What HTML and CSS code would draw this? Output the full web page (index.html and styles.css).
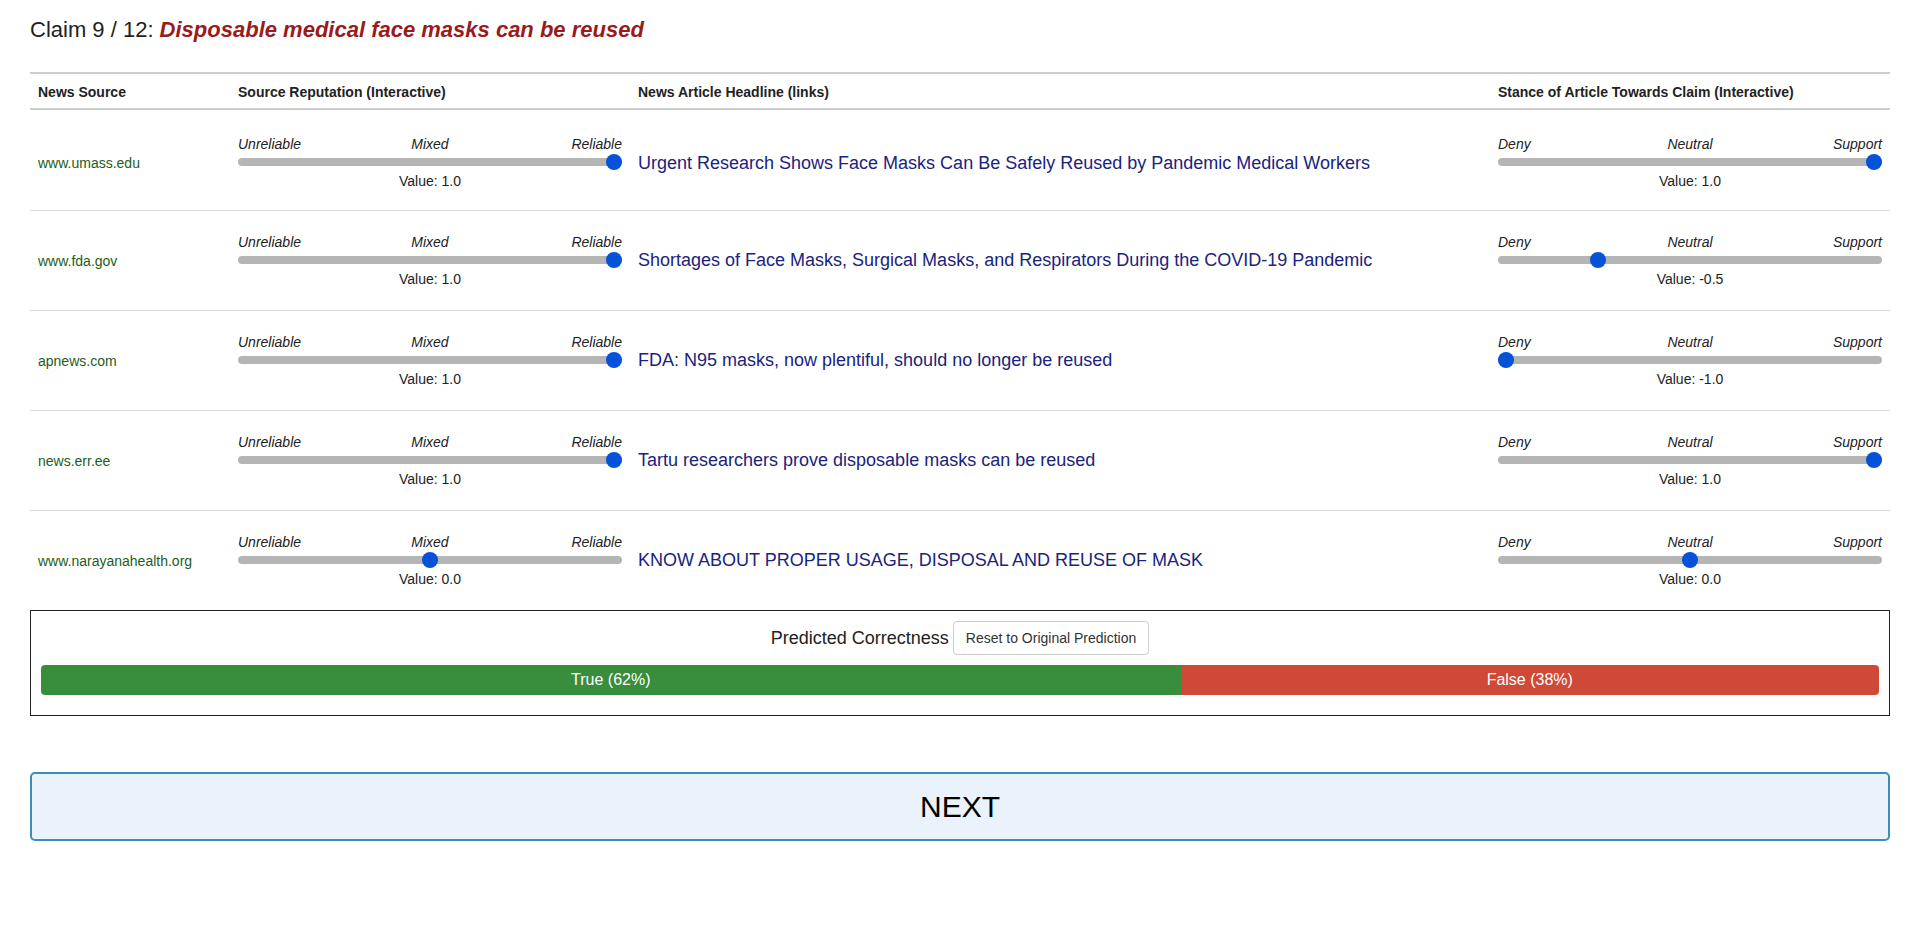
FILE: index.html
```html
<!DOCTYPE html>
<html lang="en">
<head>
<meta charset="utf-8">
<title>Claim 9 / 12</title>
<link rel="stylesheet" href="styles.css">
</head>
<body>
<div class="page">
  <h1 class="claim">Claim 9 / 12: <span class="claim-text">Disposable medical face masks can be reused</span></h1>

  <div class="sources">
    <div class="grid-row head">
      <div class="cell">News Source</div>
      <div class="cell">Source Reputation (Interactive)</div>
      <div class="cell">News Article Headline (links)</div>
      <div class="cell">Stance of Article Towards Claim (Interactive)</div>
    </div>

    <div class="grid-row item first">
      <div class="cell source">www.umass.edu</div>
      <div class="cell">
        <div class="slider-labels"><span>Unreliable</span><span>Mixed</span><span>Reliable</span></div>
        <input class="range" type="range" min="-1" max="1" step="0.1" value="1">
        <div class="value">Value: 1.0</div>
      </div>
      <div class="cell headline"><a href="#">Urgent Research Shows Face Masks Can Be Safely Reused by Pandemic Medical Workers</a></div>
      <div class="cell">
        <div class="slider-labels"><span>Deny</span><span>Neutral</span><span>Support</span></div>
        <input class="range" type="range" min="-1" max="1" step="0.1" value="1">
        <div class="value">Value: 1.0</div>
      </div>
    </div>

    <div class="grid-row item">
      <div class="cell source">www.fda.gov</div>
      <div class="cell">
        <div class="slider-labels"><span>Unreliable</span><span>Mixed</span><span>Reliable</span></div>
        <input class="range" type="range" min="-1" max="1" step="0.1" value="1">
        <div class="value">Value: 1.0</div>
      </div>
      <div class="cell headline"><a href="#">Shortages of Face Masks, Surgical Masks, and Respirators During the COVID-19 Pandemic</a></div>
      <div class="cell">
        <div class="slider-labels"><span>Deny</span><span>Neutral</span><span>Support</span></div>
        <input class="range" type="range" min="-1" max="1" step="0.1" value="-0.5">
        <div class="value">Value: -0.5</div>
      </div>
    </div>

    <div class="grid-row item">
      <div class="cell source">apnews.com</div>
      <div class="cell">
        <div class="slider-labels"><span>Unreliable</span><span>Mixed</span><span>Reliable</span></div>
        <input class="range" type="range" min="-1" max="1" step="0.1" value="1">
        <div class="value">Value: 1.0</div>
      </div>
      <div class="cell headline"><a href="#">FDA: N95 masks, now plentiful, should no longer be reused</a></div>
      <div class="cell">
        <div class="slider-labels"><span>Deny</span><span>Neutral</span><span>Support</span></div>
        <input class="range" type="range" min="-1" max="1" step="0.1" value="-1">
        <div class="value">Value: -1.0</div>
      </div>
    </div>

    <div class="grid-row item">
      <div class="cell source">news.err.ee</div>
      <div class="cell">
        <div class="slider-labels"><span>Unreliable</span><span>Mixed</span><span>Reliable</span></div>
        <input class="range" type="range" min="-1" max="1" step="0.1" value="1">
        <div class="value">Value: 1.0</div>
      </div>
      <div class="cell headline"><a href="#">Tartu researchers prove disposable masks can be reused</a></div>
      <div class="cell">
        <div class="slider-labels"><span>Deny</span><span>Neutral</span><span>Support</span></div>
        <input class="range" type="range" min="-1" max="1" step="0.1" value="1">
        <div class="value">Value: 1.0</div>
      </div>
    </div>

    <div class="grid-row item">
      <div class="cell source">www.narayanahealth.org</div>
      <div class="cell">
        <div class="slider-labels"><span>Unreliable</span><span>Mixed</span><span>Reliable</span></div>
        <input class="range" type="range" min="-1" max="1" step="0.1" value="0">
        <div class="value">Value: 0.0</div>
      </div>
      <div class="cell headline"><a href="#">KNOW ABOUT PROPER USAGE, DISPOSAL AND REUSE OF MASK</a></div>
      <div class="cell">
        <div class="slider-labels"><span>Deny</span><span>Neutral</span><span>Support</span></div>
        <input class="range" type="range" min="-1" max="1" step="0.1" value="0">
        <div class="value">Value: 0.0</div>
      </div>
    </div>
  </div>

  <div class="predict">
    <div class="predict-head">
      <span class="predict-title">Predicted Correctness</span>
      <button class="reset" type="button">Reset to Original Prediction</button>
    </div>
    <div class="bar">
      <div class="bar-true" style="width: 62%">True (62%)</div>
      <div class="bar-false">False (38%)</div>
    </div>
  </div>

  <button class="next" type="button">NEXT</button>
</div>
</body>
</html>
```

FILE: styles.css
```css
* {
  box-sizing: border-box;
}

body {
  margin: 0;
  background: #ffffff;
  font-family: "Liberation Sans", Arial, sans-serif;
  color: #222222;
}

.page {
  padding: 17px 30px 0;
}

.claim {
  margin: 0 0 30px;
  font-size: 22px;
  font-weight: normal;
  line-height: 25px;
  color: #222222;
}

.claim-text {
  color: #991b1b;
  font-weight: bold;
  font-style: italic;
}

.grid-row {
  display: grid;
  grid-template-columns: 200px 400px 1fr 400px;
  align-items: center;
}

.cell {
  padding: 0 8px;
}

.head {
  height: 38px;
  border-top: 2px solid #cdcdcd;
  border-bottom: 2px solid #cdcdcd;
  font-size: 14px;
  font-weight: bold;
  line-height: 18px;
  padding-top: 1px;
  color: #222222;
}

.item {
  height: 100px;
  border-top: 1px solid #dddddd;
}

.item.first {
  border-top: none;
  padding-top: 6px;
}

.source {
  font-size: 14px;
  color: #1b5e20;
}

.headline a {
  font-size: 18px;
  color: #1a237e;
  text-decoration: none;
}

.slider-labels {
  display: grid;
  grid-template-columns: 1fr auto 1fr;
  font-size: 14px;
  font-style: italic;
  line-height: 16px;
  color: #222222;
}

.slider-labels span:first-child {
  justify-self: start;
}

.slider-labels span:last-child {
  justify-self: end;
}

.range {
  -webkit-appearance: none;
  appearance: none;
  display: block;
  width: 100%;
  height: 16px;
  margin: 2px 0 3px;
  padding: 0;
  background: transparent;
}

.range::-webkit-slider-runnable-track {
  height: 8px;
  background: #b5b5b5;
  border-radius: 4px;
}

.range::-webkit-slider-thumb {
  -webkit-appearance: none;
  appearance: none;
  width: 16px;
  height: 16px;
  margin-top: -4px;
  border: none;
  border-radius: 50%;
  background: #0552d8;
}

.value {
  text-align: center;
  font-size: 14px;
  line-height: 17px;
  color: #222222;
}

.predict {
  border: 1px solid #222222;
  padding: 10px;
}

.predict-head {
  display: flex;
  justify-content: center;
  align-items: center;
  gap: 4px;
  margin-bottom: 10px;
}

.predict-title {
  font-size: 18px;
  color: #222222;
}

.reset {
  font-family: "Liberation Sans", Arial, sans-serif;
  font-size: 14px;
  line-height: 20px;
  padding: 6px 12px;
  border: 1px solid #cccccc;
  border-radius: 4px;
  background: #ffffff;
  color: #333333;
}

.bar {
  display: flex;
  height: 30px;
  border-radius: 4px;
  overflow: hidden;
  margin-bottom: 10px;
  font-size: 16px;
  line-height: 30px;
  color: #ffffff;
  text-align: center;
}

.bar-true {
  background: #388e3c;
}

.bar-false {
  flex: 1;
  background: #cf4a36;
}

.next {
  display: block;
  width: 100%;
  height: 69px;
  margin-top: 56px;
  border: 2px solid #3a8fb7;
  border-radius: 5px;
  background: #eaf3fb;
  font-family: "Liberation Sans", Arial, sans-serif;
  font-size: 30px;
  color: #000000;
}
```
